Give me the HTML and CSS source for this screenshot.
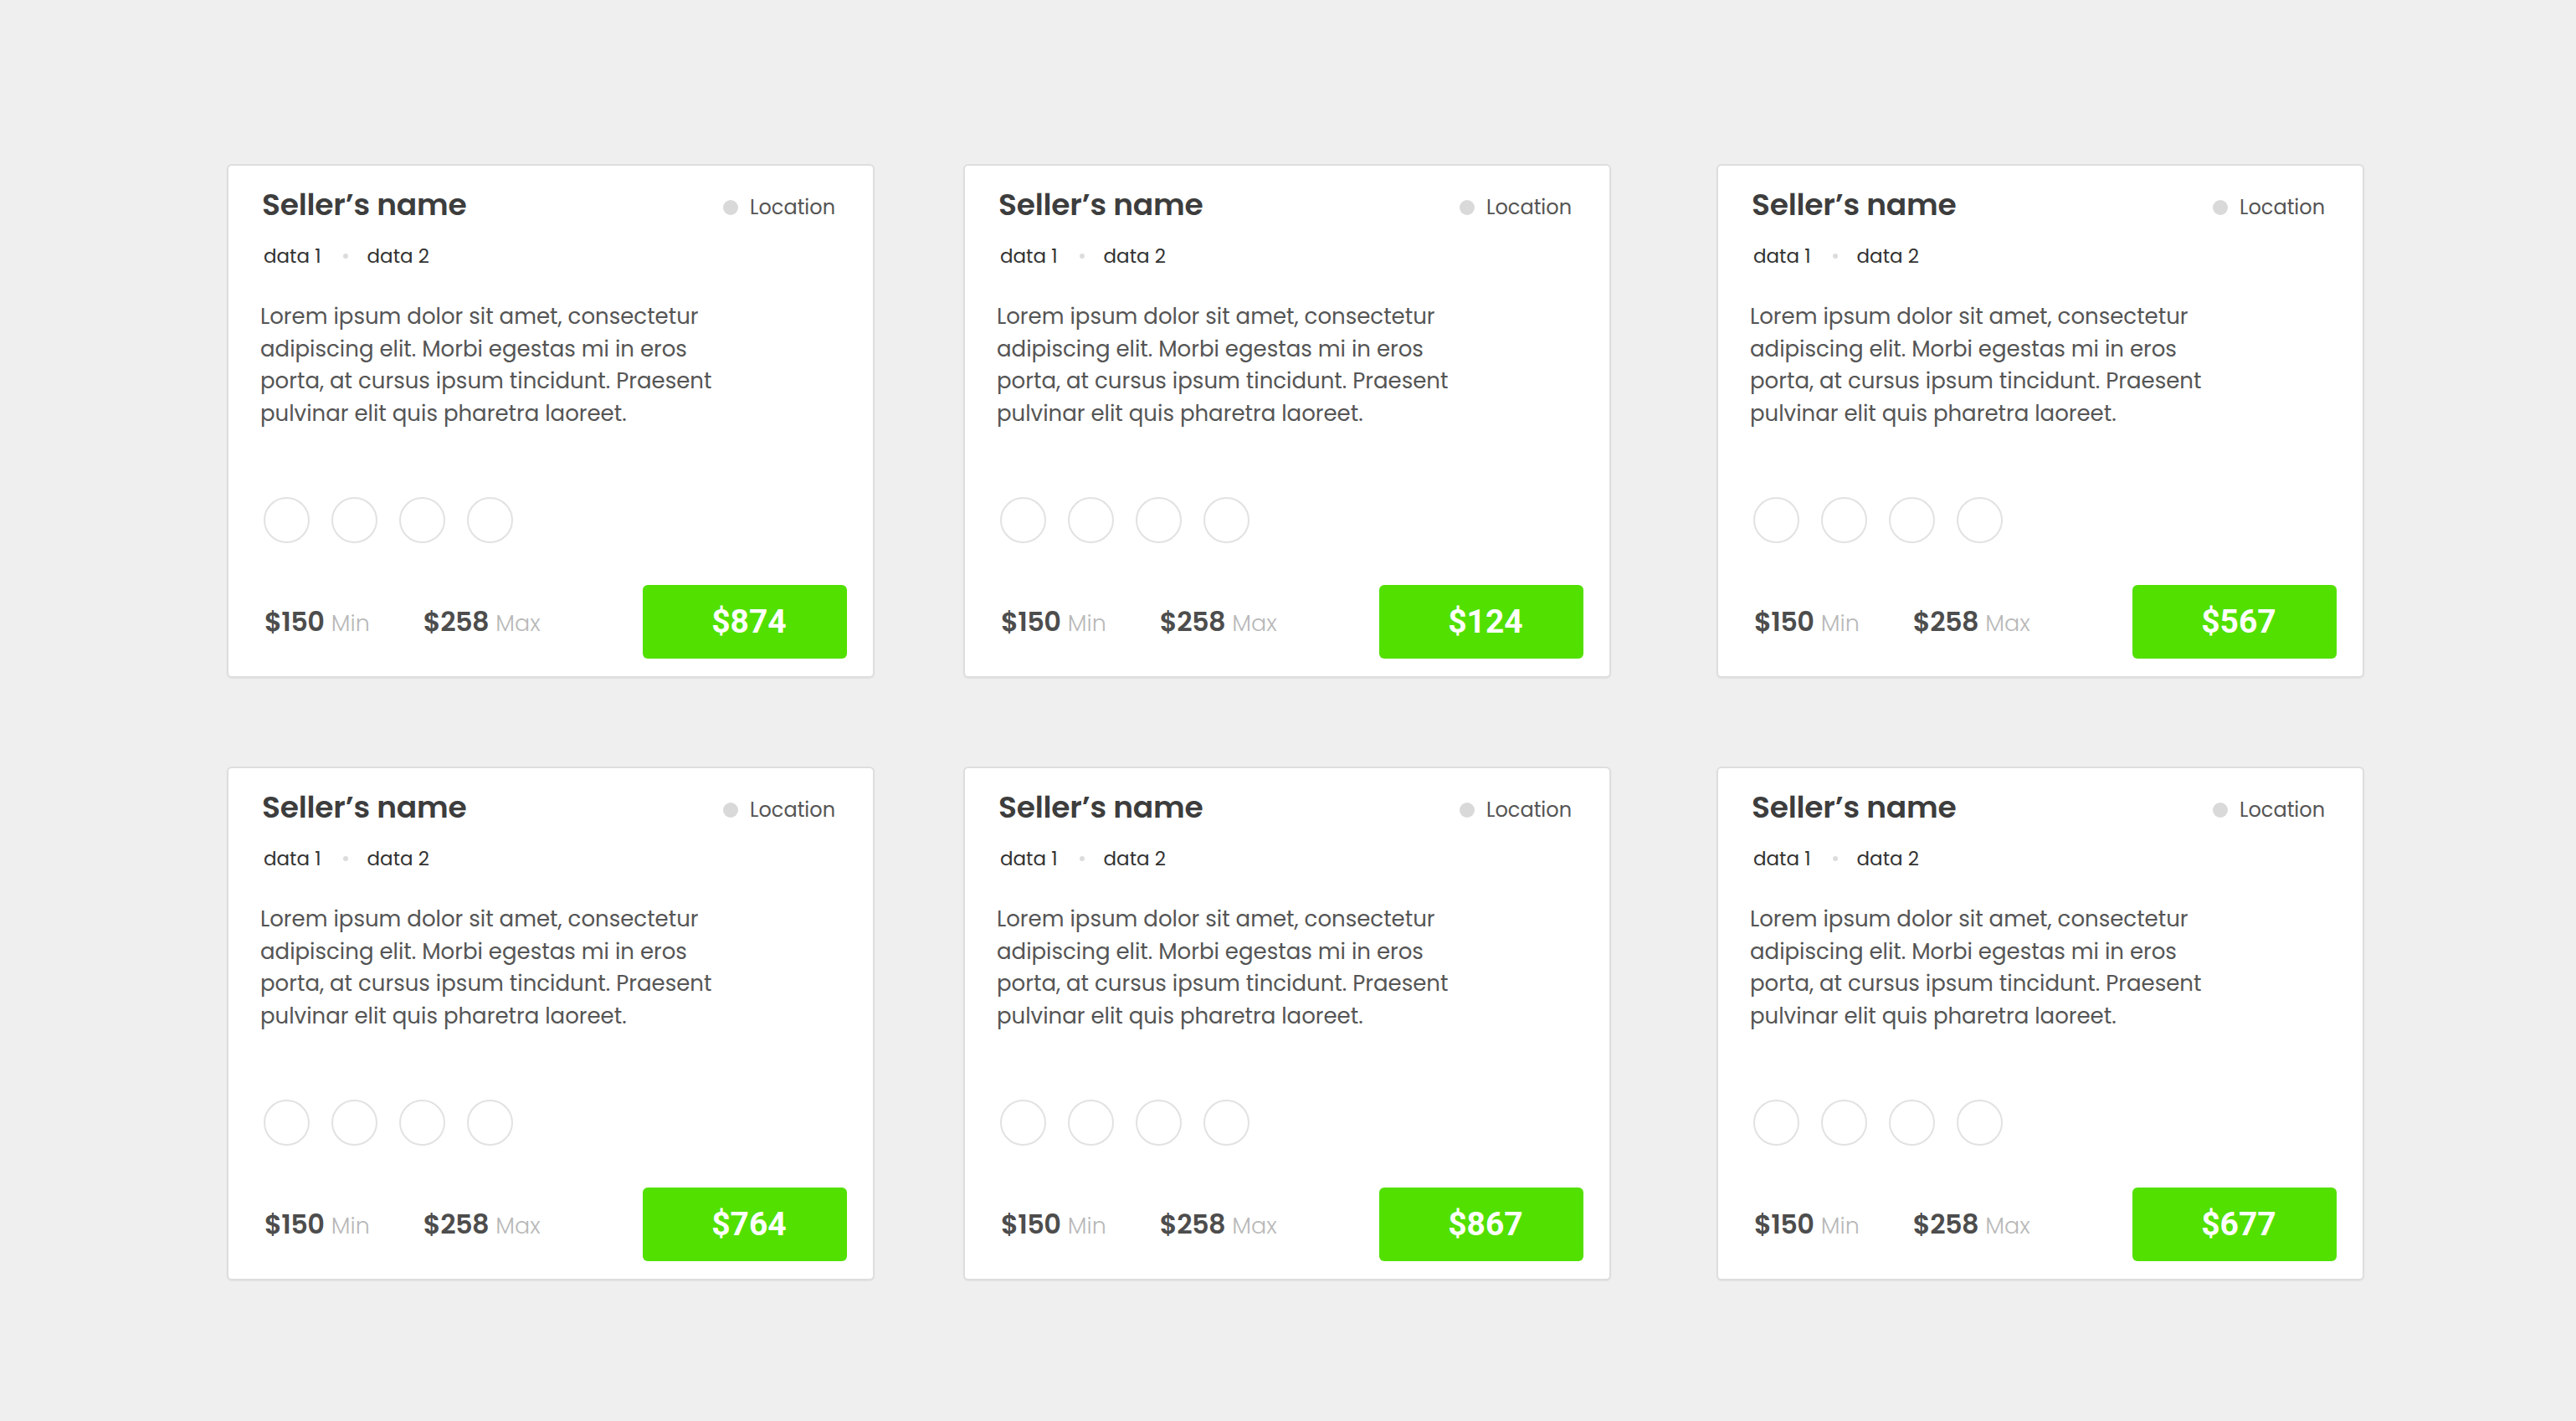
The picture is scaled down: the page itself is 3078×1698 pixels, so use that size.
FILE: index.html
```html
<!DOCTYPE html>
<html lang="en">
<head>
<meta charset="utf-8">
<title>Sellers</title>
<link rel="stylesheet" href="styles.css">
</head>
<body>
<main class="grid">
  <article class="card">
    <header class="card-head">
      <h2 class="seller">Seller’s name</h2>
      <span class="location"><span class="loc-dot"></span>Location</span>
    </header>
    <div class="meta"><span>data 1</span><span class="sep"></span><span>data 2</span></div>
    <p class="desc">Lorem ipsum dolor sit amet, consectetur<br>adipiscing elit. Morbi egestas mi in eros<br>porta, at cursus ipsum tincidunt. Praesent<br>pulvinar elit quis pharetra laoreet.</p>
    <div class="swatches"><span class="swatch"></span><span class="swatch"></span><span class="swatch"></span><span class="swatch"></span></div>
    <footer class="card-foot">
      <span class="price"><b>$150</b> <span class="unit">Min</span></span>
      <span class="price"><b>$258</b> <span class="unit">Max</span></span>
      <button class="buy">$874</button>
    </footer>
  </article>
  <article class="card">
    <header class="card-head">
      <h2 class="seller">Seller’s name</h2>
      <span class="location"><span class="loc-dot"></span>Location</span>
    </header>
    <div class="meta"><span>data 1</span><span class="sep"></span><span>data 2</span></div>
    <p class="desc">Lorem ipsum dolor sit amet, consectetur<br>adipiscing elit. Morbi egestas mi in eros<br>porta, at cursus ipsum tincidunt. Praesent<br>pulvinar elit quis pharetra laoreet.</p>
    <div class="swatches"><span class="swatch"></span><span class="swatch"></span><span class="swatch"></span><span class="swatch"></span></div>
    <footer class="card-foot">
      <span class="price"><b>$150</b> <span class="unit">Min</span></span>
      <span class="price"><b>$258</b> <span class="unit">Max</span></span>
      <button class="buy">$124</button>
    </footer>
  </article>
  <article class="card">
    <header class="card-head">
      <h2 class="seller">Seller’s name</h2>
      <span class="location"><span class="loc-dot"></span>Location</span>
    </header>
    <div class="meta"><span>data 1</span><span class="sep"></span><span>data 2</span></div>
    <p class="desc">Lorem ipsum dolor sit amet, consectetur<br>adipiscing elit. Morbi egestas mi in eros<br>porta, at cursus ipsum tincidunt. Praesent<br>pulvinar elit quis pharetra laoreet.</p>
    <div class="swatches"><span class="swatch"></span><span class="swatch"></span><span class="swatch"></span><span class="swatch"></span></div>
    <footer class="card-foot">
      <span class="price"><b>$150</b> <span class="unit">Min</span></span>
      <span class="price"><b>$258</b> <span class="unit">Max</span></span>
      <button class="buy">$567</button>
    </footer>
  </article>
  <article class="card">
    <header class="card-head">
      <h2 class="seller">Seller’s name</h2>
      <span class="location"><span class="loc-dot"></span>Location</span>
    </header>
    <div class="meta"><span>data 1</span><span class="sep"></span><span>data 2</span></div>
    <p class="desc">Lorem ipsum dolor sit amet, consectetur<br>adipiscing elit. Morbi egestas mi in eros<br>porta, at cursus ipsum tincidunt. Praesent<br>pulvinar elit quis pharetra laoreet.</p>
    <div class="swatches"><span class="swatch"></span><span class="swatch"></span><span class="swatch"></span><span class="swatch"></span></div>
    <footer class="card-foot">
      <span class="price"><b>$150</b> <span class="unit">Min</span></span>
      <span class="price"><b>$258</b> <span class="unit">Max</span></span>
      <button class="buy">$764</button>
    </footer>
  </article>
  <article class="card">
    <header class="card-head">
      <h2 class="seller">Seller’s name</h2>
      <span class="location"><span class="loc-dot"></span>Location</span>
    </header>
    <div class="meta"><span>data 1</span><span class="sep"></span><span>data 2</span></div>
    <p class="desc">Lorem ipsum dolor sit amet, consectetur<br>adipiscing elit. Morbi egestas mi in eros<br>porta, at cursus ipsum tincidunt. Praesent<br>pulvinar elit quis pharetra laoreet.</p>
    <div class="swatches"><span class="swatch"></span><span class="swatch"></span><span class="swatch"></span><span class="swatch"></span></div>
    <footer class="card-foot">
      <span class="price"><b>$150</b> <span class="unit">Min</span></span>
      <span class="price"><b>$258</b> <span class="unit">Max</span></span>
      <button class="buy">$867</button>
    </footer>
  </article>
  <article class="card">
    <header class="card-head">
      <h2 class="seller">Seller’s name</h2>
      <span class="location"><span class="loc-dot"></span>Location</span>
    </header>
    <div class="meta"><span>data 1</span><span class="sep"></span><span>data 2</span></div>
    <p class="desc">Lorem ipsum dolor sit amet, consectetur<br>adipiscing elit. Morbi egestas mi in eros<br>porta, at cursus ipsum tincidunt. Praesent<br>pulvinar elit quis pharetra laoreet.</p>
    <div class="swatches"><span class="swatch"></span><span class="swatch"></span><span class="swatch"></span><span class="swatch"></span></div>
    <footer class="card-foot">
      <span class="price"><b>$150</b> <span class="unit">Min</span></span>
      <span class="price"><b>$258</b> <span class="unit">Max</span></span>
      <button class="buy">$677</button>
    </footer>
  </article>
</main>
</body>
</html>
```
FILE: styles.css
```css
* { box-sizing: border-box; }

html, body {
  margin: 0;
  padding: 0;
  background: #efefef;
}

body {
  font-family: "Poppins", "Inter", "Noto Sans", sans-serif;
  color: #4a4a4a;
  min-height: 1698px;
}

.grid {
  display: grid;
  grid-template-columns: 774px 794px 774px;
  column-gap: 106px;
  row-gap: 106px;
  padding: 196px 0 0 271px;
}

.card {
  width: 774px;
  height: 614px;
  background: #fff;
  border: 2px solid #dedede;
  border-radius: 6px;
  box-shadow: 0 1px 2px rgba(0, 0, 0, 0.06);
  display: flex;
  flex-direction: column;
  padding: 25px 31px 21px 40px;
}

.card-head {
  display: flex;
  justify-content: space-between;
  align-items: center;
}

.seller {
  margin: 0;
  font-size: 36px;
  line-height: 44px;
  font-weight: 600;
  color: #3d3d3d;
  letter-spacing: -0.2px;
}

.location {
  display: flex;
  align-items: center;
  gap: 14px;
  margin-right: 14px;
  font-size: 24px;
  line-height: 30px;
  color: #555;
  margin-top: 6px;
}

.loc-dot {
  width: 18px;
  height: 18px;
  border-radius: 50%;
  background: #d9d9d9;
}

.meta {
  display: flex;
  align-items: center;
  margin-top: 24px;
  padding-left: 2px;
  font-size: 23px;
  line-height: 30px;
  color: #333;
}

.sep {
  width: 6px;
  height: 6px;
  border-radius: 50%;
  background: #dcdcdc;
  margin: 0 23px 0 26px;
}

.desc {
  margin: 38px 0 0 -2px;
  font-size: 26px;
  line-height: 38.6px;
  color: #555;
}

.swatches {
  display: flex;
  gap: 26px;
  margin-top: 81px;
  padding-left: 2px;
}

.swatch {
  width: 55px;
  height: 55px;
  border-radius: 50%;
  border: 2px solid #e2e2e2;
}

.card-foot {
  display: flex;
  align-items: center;
  margin-top: 50px;
  padding-left: 3px;
}

.price {
  font-size: 27px;
  color: #b8b8b8;
  font-weight: 300;
  margin-right: 64px;
}

.price b {
  font-size: 32px;
  font-weight: 600;
  color: #4d4d4d;
  letter-spacing: -0.6px;
}

.unit {
  margin-left: 1px;
}

.buy {
  margin-left: auto;
  width: 244px;
  height: 88px;
  border: 0;
  border-radius: 6px;
  background: #52e000;
  color: #fff;
  font-family: "Roboto", "Liberation Sans", sans-serif;
  font-weight: 700;
  font-size: 39px;
  padding: 0 0 0 10px;
}
```
